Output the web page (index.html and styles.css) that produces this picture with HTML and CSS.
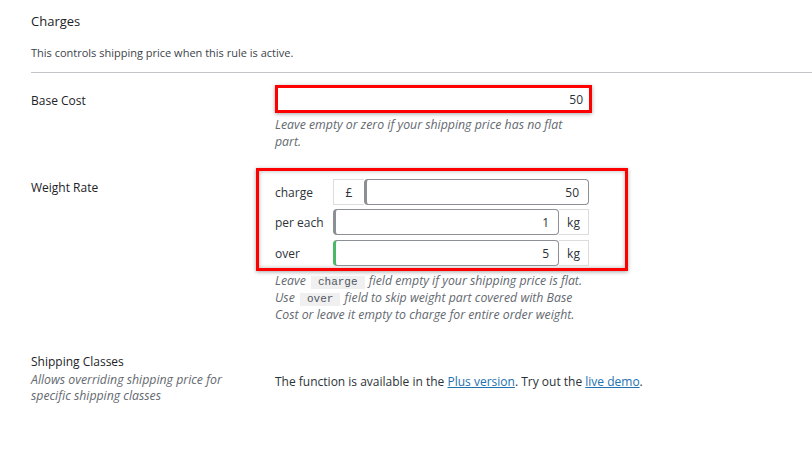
FILE: index.html
```html
<!DOCTYPE html>
<html>
<head>
<meta charset="utf-8">
<link rel="stylesheet" href="styles.css">
</head>
<body>
<div class="page">
  <h3 class="section-title">Charges</h3>
  <p class="section-desc">This controls shipping price when this rule is active.</p>
  <hr class="divider">

  <div class="row row-base">
    <div class="label">Base Cost</div>
    <div class="field">
      <div class="mark mark-base">
        <div class="input input-base">50</div>
      </div>
      <p class="help help-base">Leave empty or zero if your shipping price has no flat part.</p>
    </div>
  </div>

  <div class="row row-weight">
    <div class="label">Weight Rate</div>
    <div class="field">
      <div class="mark mark-weight">
        <div class="wrow">
          <span class="wlabel">charge</span>
          <span class="addon addon-pre">£</span>
          <span class="input winput thick">50</span>
        </div>
        <div class="wrow">
          <span class="wlabel">per each</span>
          <span class="input winput thick">1</span>
          <span class="addon addon-post">kg</span>
        </div>
        <div class="wrow">
          <span class="wlabel">over</span>
          <span class="input winput thick green">5</span>
          <span class="addon addon-post">kg</span>
        </div>
      </div>
      <p class="help help-weight"><span>Leave </span><code>charge</code><span> field empty if your shipping price is flat.</span> <span>Use </span><code>over</code><span> field to skip weight part covered with Base</span> <span>Cost or leave it empty to charge for entire order weight.</span></p>
    </div>
  </div>

  <div class="row row-classes">
    <div class="label">Shipping Classes<span class="label-desc">Allows overriding shipping price for specific shipping classes</span></div>
    <div class="field">
      <p class="plus">The function is available in the <a href="#">Plus version</a>. Try out the <a href="#">live demo</a>.</p>
    </div>
  </div>
</div>
</body>
</html>
```
FILE: styles.css
```css
* { box-sizing: border-box; }
html, body { margin: 0; padding: 0; background: #fff; }
body {
  font-family: "Open Sans", "Noto Sans", sans-serif;
  font-size: 12px;
  color: #1d2327;
  width: 812px;
  height: 452px;
  overflow: hidden;
}
.page { padding-left: 31px; }
.section-title {
  margin: 0;
  padding-top: 12px;
  font-size: 13px;
  font-weight: 400;
  line-height: 18px;
  color: #1d2327;
}
.section-desc {
  margin: 14px 0 0;
  font-size: 11px;
  line-height: 18px;
  color: #3c434a;
}
.divider {
  margin: 10px 0 0;
  border: 0;
  border-top: 1px solid #c3c4c7;
  height: 0;
}
.row { display: flex; }
.label {
  width: 244px;
  flex: none;
  font-size: 12px;
  line-height: 18px;
}
.field { flex: none; }

.row-base { padding-top: 12px; }
.row-base .label { padding-top: 7px; }
.mark {
  border: 3px solid #ff0000;
  box-shadow: 0 1px 4px rgba(0,0,0,.35), inset 0 0 4px rgba(0,0,0,.3);
}
.mark-base { width: 317px; height: 28px; }
.input {
  display: flex;
  align-items: center;
  justify-content: flex-end;
  background: #fff;
  color: #2c3338;
  font-size: 12px;
}
.input-base { height: 22px; padding-right: 6px; }
.help {
  margin: 0;
  font-style: italic;
  color: #646970;
  font-size: 12.3px;
  line-height: 17px;
}
.help-base { width: 312px; margin-top: 3px; }

.row-weight { padding-top: 18px; }
.row-weight .label { padding-top: 11px; }
.mark-weight {
  margin-left: -19px;
  width: 372px;
  height: 103px;
  padding: 8px 36px 0 16px;
  display: flex;
  flex-direction: column;
  gap: 4px;
}
.wrow { display: flex; height: 26px; align-items: stretch; }
.wrow + .wrow + .wrow { margin-top: 1px; }
.wlabel {
  width: 58px;
  flex: none;
  display: flex;
  align-items: center;
  color: #2c3338;
  font-size: 12px;
}
.addon {
  flex: none;
  width: 31px;
  border: 1px solid #dcdcde;
  display: flex;
  align-items: center;
  justify-content: center;
  color: #2c3338;
  font-size: 12px;
}
.addon-pre { border-right: 0; }
.addon-post { width: 30px; border-left: 0; }
.winput {
  flex: 1;
  border: 1px solid #8c8f94;
  border-radius: 4px;
  padding-right: 9px;
}
.winput.thick { border-left: 3px solid #8c8f94; }
.winput.green { border-left-color: #4ab866; }
.help-weight { width: 314px; margin-top: 1px; }
code {
  display: inline-block;
  font-family: "Liberation Mono", monospace;
  font-style: normal;
  font-size: 11px;
  line-height: 13px;
  background: #f0f0f1;
  padding: 0 7px;
  margin: 0 1px 0 2px;
  color: #50575e;
}

.row-classes { padding-top: 30px; }
.label-desc {
  display: block;
  font-style: italic;
  color: #646970;
  font-size: 12.3px;
  line-height: 16px;
  width: 210px;
  margin-top: 1px;
}
.plus {
  margin: 20px 0 0;
  font-size: 12px;
  line-height: 18px;
  color: #2c3338;
}
.plus a { color: #2271b1; text-decoration: underline; }
```
